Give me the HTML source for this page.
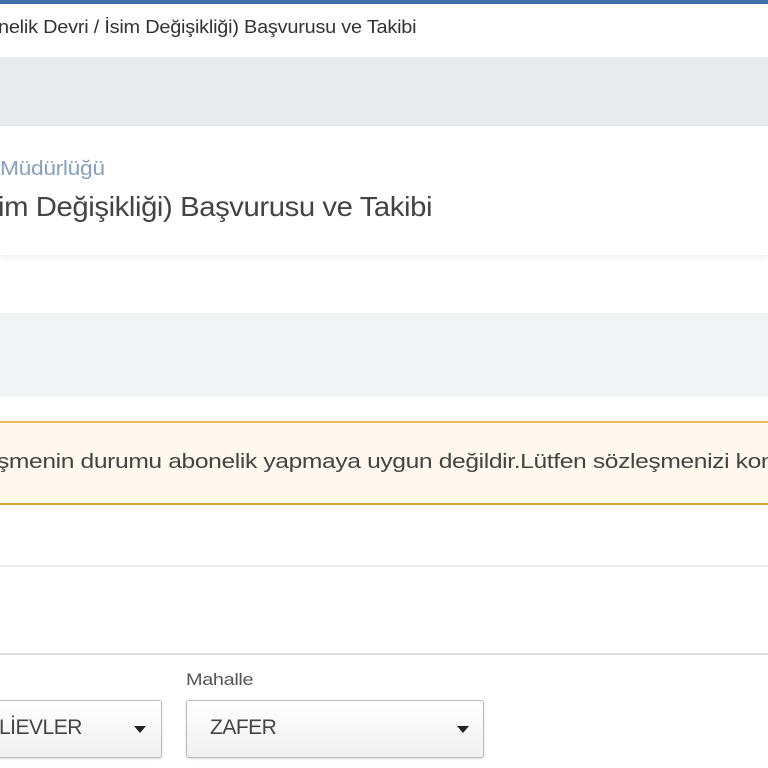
<!DOCTYPE html>
<html><head><meta charset="utf-8"><style>
html,body{margin:0;padding:0;width:768px;height:768px;overflow:hidden;background:#fff;font-family:"Liberation Sans","DejaVu Sans",sans-serif;position:relative}
div,span{position:absolute;white-space:nowrap;transform-origin:0 0}
</style></head><body>
<div style="left:0;top:0;width:768px;height:4px;background:#3e70a8"></div>
<div style="left:-2px;top:17px;font-size:18px;color:#333;letter-spacing:-0.2px;transform:scaleX(1.105)">nelik Devri / İsim Değişikliği) Başvurusu ve Takibi</div>
<div style="left:0;top:57px;width:768px;height:69px;background:#e8eaed"></div>
<div style="left:0;top:126px;width:768px;height:129px;background:#fff;box-shadow:0 3px 6px rgba(0,0,0,0.06)"></div>
<div style="left:0;top:158px;font-size:20px;color:#8aa0b8;letter-spacing:-0.3px;transform:scaleX(1.14)">Müdürlüğü</div>
<div style="left:-2px;top:191px;font-size:28px;color:#444;letter-spacing:-0.4px;transform:scaleX(1.046)">im Değişikliği) Başvurusu ve Takibi</div>
<div style="left:0;top:313px;width:768px;height:84px;background:#f3f4f6"></div>
<div style="left:0;top:421px;width:768px;height:80px;background:#fef8ee;border-top:2px solid #e8bd5a;border-bottom:2px solid #e0a23a"></div>
<div style="left:-3px;top:451px;font-size:20px;color:#444;letter-spacing:-0.3px;transform:scaleX(1.23)">şmenin durumu abonelik yapmaya uygun değildir.Lütfen sözleşmenizi kon</div>
<div style="left:0;top:565px;width:768px;height:2px;background:#eee"></div>
<div style="left:0;top:653px;width:768px;height:2px;background:#ddd"></div>
<div style="left:186px;top:670px;font-size:17px;color:#555;letter-spacing:-0.3px;transform:scaleX(1.17)">Mahalle</div>
<div style="left:-10px;top:700px;width:170px;height:56px;border:1px solid #bbb;border-radius:3px;background:linear-gradient(#fff,#f0f0f0);box-shadow:0 1px 2px rgba(0,0,0,.15)"></div>
<div style="left:-1px;top:716px;font-size:21px;color:#444;letter-spacing:-0.5px">LİEVLER</div>
<div style="left:134px;top:726px;width:0;height:0;border-left:6px solid transparent;border-right:6px solid transparent;border-top:7px solid #222"></div>
<div style="left:186px;top:700px;width:296px;height:56px;border:1px solid #bbb;border-radius:3px;background:linear-gradient(#fff,#f0f0f0);box-shadow:0 1px 2px rgba(0,0,0,.15)"></div>
<div style="left:210px;top:716px;font-size:21px;color:#444;letter-spacing:-0.5px">ZAFER</div>
<div style="left:457px;top:726px;width:0;height:0;border-left:6px solid transparent;border-right:6px solid transparent;border-top:7px solid #222"></div>
</body></html>
